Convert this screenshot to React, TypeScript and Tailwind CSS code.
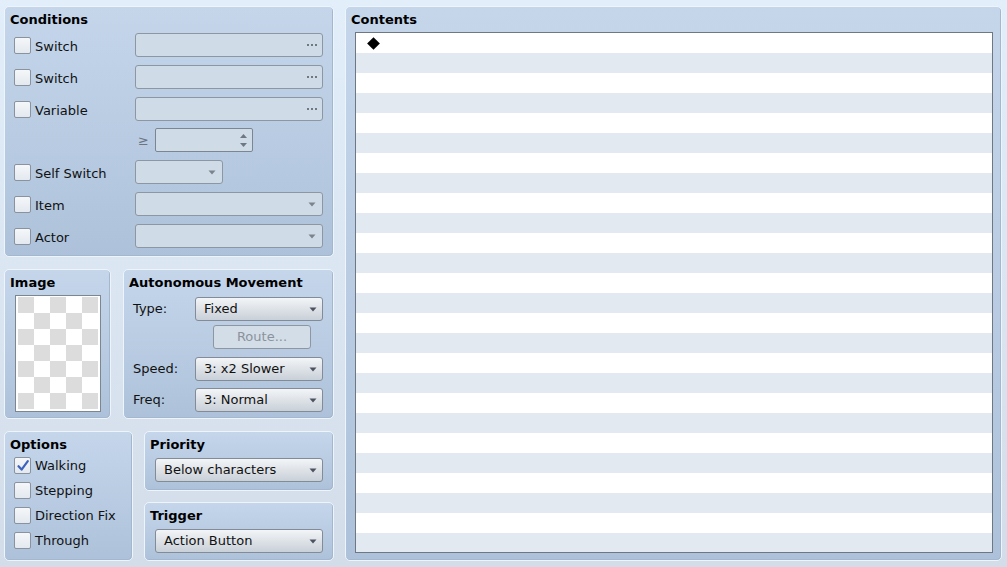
import React from "react";

const FONT = { fontFamily: '"DejaVu Sans", "Liberation Sans", sans-serif' };

function Panel({
  title,
  className,
  children,
}: {
  title: string;
  className: string;
  children?: React.ReactNode;
}) {
  return (
    <div
      className={
        "flex flex-col rounded-[5px] border border-[#eef4fb] bg-gradient-to-b from-[#c5d6eb] to-[#adc2da] shadow-[inset_-1px_-1px_0_#a3b7ce] px-[5px] pt-[5px] " +
        className
      }
    >
      <div className="h-[16px] text-[13px] font-bold leading-[16px] text-black">{title}</div>
      {children}
    </div>
  );
}

function Check({ checked = false }: { checked?: boolean }) {
  return (
    <div className="relative h-[17px] w-[17px] shrink-0 rounded-[2px] border border-[#8a939d] bg-gradient-to-b from-[#f5f7f9] to-[#e3e9ef]">
      {checked && (
        <svg className="absolute left-[1px] top-[1px]" width="14" height="14" viewBox="0 0 14 14">
          <path d="M2.5 7.2 L5.6 10.6 L11.8 2.2" fill="none" stroke="#3b62bd" strokeWidth="2.2" strokeLinecap="round" strokeLinejoin="round" />
        </svg>
      )}
    </div>
  );
}

function Arrow({ color = "#4b5360" }: { color?: string }) {
  return (
    <svg width="8" height="5" viewBox="0 0 8 5" className="shrink-0">
      <path d="M0.5 0.5 L7.5 0.5 L4 4.5 Z" fill={color} />
    </svg>
  );
}

function Dots() {
  return (
    <div className="flex gap-[2px]">
      <div className="h-[2px] w-[2px] bg-[#6e7782]" />
      <div className="h-[2px] w-[2px] bg-[#6e7782]" />
      <div className="h-[2px] w-[2px] bg-[#6e7782]" />
    </div>
  );
}

function DisabledBox({ className, kind }: { className: string; kind: "dots" | "arrow" }) {
  return (
    <div
      className={
        "flex h-[24px] items-center justify-end rounded-[3px] border border-[#8c97a2] bg-[#cfdbe6] pr-[5px] " + className
      }
    >
      {kind === "dots" ? <Dots /> : <Arrow color="#7a838e" />}
    </div>
  );
}

function Combo({ label, className }: { label: string; className: string }) {
  return (
    <div
      className={
        "flex h-[24px] items-center justify-between rounded-[3px] border border-[#838c96] bg-gradient-to-b from-[#f3f5f7] to-[#c9d0d8] pl-[8px] pr-[5px] text-[13px] text-[#111]" +
        " " +
        className
      }
    >
      <span className="leading-[16px]">{label}</span>
      <Arrow />
    </div>
  );
}

function CondRow({ label, children }: { label: string; children: React.ReactNode }) {
  return (
    <div className="flex h-[24px] items-center">
      <div className="flex w-[125px] items-center pl-[4px]">
        <Check />
        <span className="ml-[4px] pt-[3px] text-[13px] leading-[16px] text-[#111]">{label}</span>
      </div>
      {children}
    </div>
  );
}

function OptRow({ label, checked = false }: { label: string; checked?: boolean }) {
  return (
    <div className="flex h-[25px] items-center pl-[4px]">
      <Check checked={checked} />
      <span className="ml-[4px] text-[13px] leading-[16px] text-[#111]">{label}</span>
    </div>
  );
}

const ROWS = Array.from({ length: 26 }, (_, i) => i);
const CHECKER = Array.from({ length: 35 }, (_, i) => i);

export default function App() {
  return (
    <div
      style={FONT}
      className="flex h-[567px] w-[1007px] gap-[11px] overflow-hidden bg-gradient-to-b from-[#e3eefb] to-[#d2dde9] pb-[6px] pl-[4px] pr-[5px] pt-[6px]"
    >
      {/* Left column */}
      <div className="flex w-[330px] shrink-0 flex-col">
        <Panel title="Conditions" className="h-[251px]">
          <div className="mt-[5px] flex flex-col">
            <CondRow label="Switch">
              <DisabledBox kind="dots" className="w-[188px]" />
            </CondRow>
            <div className="h-[8px]" />
            <CondRow label="Switch">
              <DisabledBox kind="dots" className="w-[188px]" />
            </CondRow>
            <div className="h-[8px]" />
            <CondRow label="Variable">
              <DisabledBox kind="dots" className="w-[188px]" />
            </CondRow>
            <div className="h-[7px]" />
            <div className="flex h-[24px] items-center">
              <div className="w-[128px] shrink-0" />
              <span className="w-[17px] shrink-0 pt-[2px] text-[13px] leading-[16px] text-[#6b7480]">≥</span>
              <div className="flex h-[24px] w-[98px] items-center justify-end rounded-[2px] border border-[#7c8691] bg-[#cfdbe6] pr-[5px]">
                <div className="flex flex-col gap-[5px]">
                  <svg width="7" height="4" viewBox="0 0 7 4">
                    <path d="M0 4 L7 4 L3.5 0 Z" fill="#6e7782" />
                  </svg>
                  <svg width="7" height="4" viewBox="0 0 7 4">
                    <path d="M0 0 L7 0 L3.5 4 Z" fill="#6e7782" />
                  </svg>
                </div>
              </div>
            </div>
            <div className="h-[8px]" />
            <CondRow label="Self Switch">
              <DisabledBox kind="arrow" className="w-[88px] pr-[6px]" />
            </CondRow>
            <div className="h-[8px]" />
            <CondRow label="Item">
              <DisabledBox kind="arrow" className="w-[188px] pr-[6px]" />
            </CondRow>
            <div className="h-[8px]" />
            <CondRow label="Actor">
              <DisabledBox kind="arrow" className="w-[188px] pr-[6px]" />
            </CondRow>
          </div>
        </Panel>

        <div className="mt-[12px] flex h-[150px] gap-[12px]">
          <Panel title="Image" className="w-[107px]">
            <div className="ml-[5px] mt-[4px] h-[117px] w-[86px] border border-[#7d858e] bg-white p-[2px] pt-[1px]">
              <div className="grid grid-cols-[repeat(5,16px)] grid-rows-[repeat(7,16px)]">
                {CHECKER.map((i) => {
                  const r = Math.floor(i / 5);
                  const c = i % 5;
                  return (
                    <div
                      key={i}
                      className={(r + c) % 2 === 0 ? "bg-[#dcdcdc]" : "bg-white"}
                    />
                  );
                })}
              </div>
            </div>
          </Panel>

          <Panel title="Autonomous Movement" className="w-[211px]">
            <div className="mt-[6px] flex flex-col">
              <div className="flex h-[24px] items-center">
                <span className="w-[66px] shrink-0 pl-[4px] text-[13px] leading-[16px] text-[#111]">Type:</span>
                <Combo label="Fixed" className="w-[128px]" />
              </div>
              <div className="mt-[4px] flex h-[24px]">
                <div className="ml-[84px] flex h-[24px] w-[98px] items-center justify-center rounded-[3px] border border-[#8c97a2] bg-[#d3dde8] text-[13px] leading-[16px] text-[#8a939c]">
                  Route...
                </div>
              </div>
              <div className="mt-[8px] flex h-[24px] items-center">
                <span className="w-[66px] shrink-0 pl-[4px] text-[13px] leading-[16px] text-[#111]">Speed:</span>
                <Combo label="3: x2 Slower" className="w-[128px]" />
              </div>
              <div className="mt-[7px] flex h-[24px] items-center">
                <span className="w-[66px] shrink-0 pl-[4px] text-[13px] leading-[16px] text-[#111]">Freq:</span>
                <Combo label="3: Normal" className="w-[128px]" />
              </div>
            </div>
          </Panel>
        </div>

        <div className="mt-[12px] flex h-[130px] gap-[11px]">
          <Panel title="Options" className="w-[129px]">
            <div className="flex flex-col">
              <OptRow label="Walking" checked />
              <OptRow label="Stepping" />
              <OptRow label="Direction Fix" />
              <OptRow label="Through" />
            </div>
          </Panel>
          <div className="flex w-[190px] flex-col gap-[11px]">
            <Panel title="Priority" className="h-[60px]">
              <Combo label="Below characters" className="ml-[5px] mt-[5px] w-[168px]" />
            </Panel>
            <Panel title="Trigger" className="h-[59px]">
              <Combo label="Action Button" className="ml-[5px] mt-[5px] w-[168px]" />
            </Panel>
          </div>
        </div>
      </div>

      {/* Contents */}
      <Panel title="Contents" className="h-[555px] w-[657px]">
        <div className="ml-[4px] mt-[4px] h-[521px] w-[638px] overflow-hidden border border-[#6f7782] bg-white">
          {ROWS.map((i) => (
            <div
              key={i}
              className={"relative h-[20px] " + (i % 2 === 0 ? "bg-white" : "bg-[#e2e9f1]")}
            >
              {i === 0 && (
                <div className="absolute left-[13px] top-[6px] h-[9px] w-[9px] rotate-45 bg-black" />
              )}
            </div>
          ))}
        </div>
      </Panel>
    </div>
  );
}
